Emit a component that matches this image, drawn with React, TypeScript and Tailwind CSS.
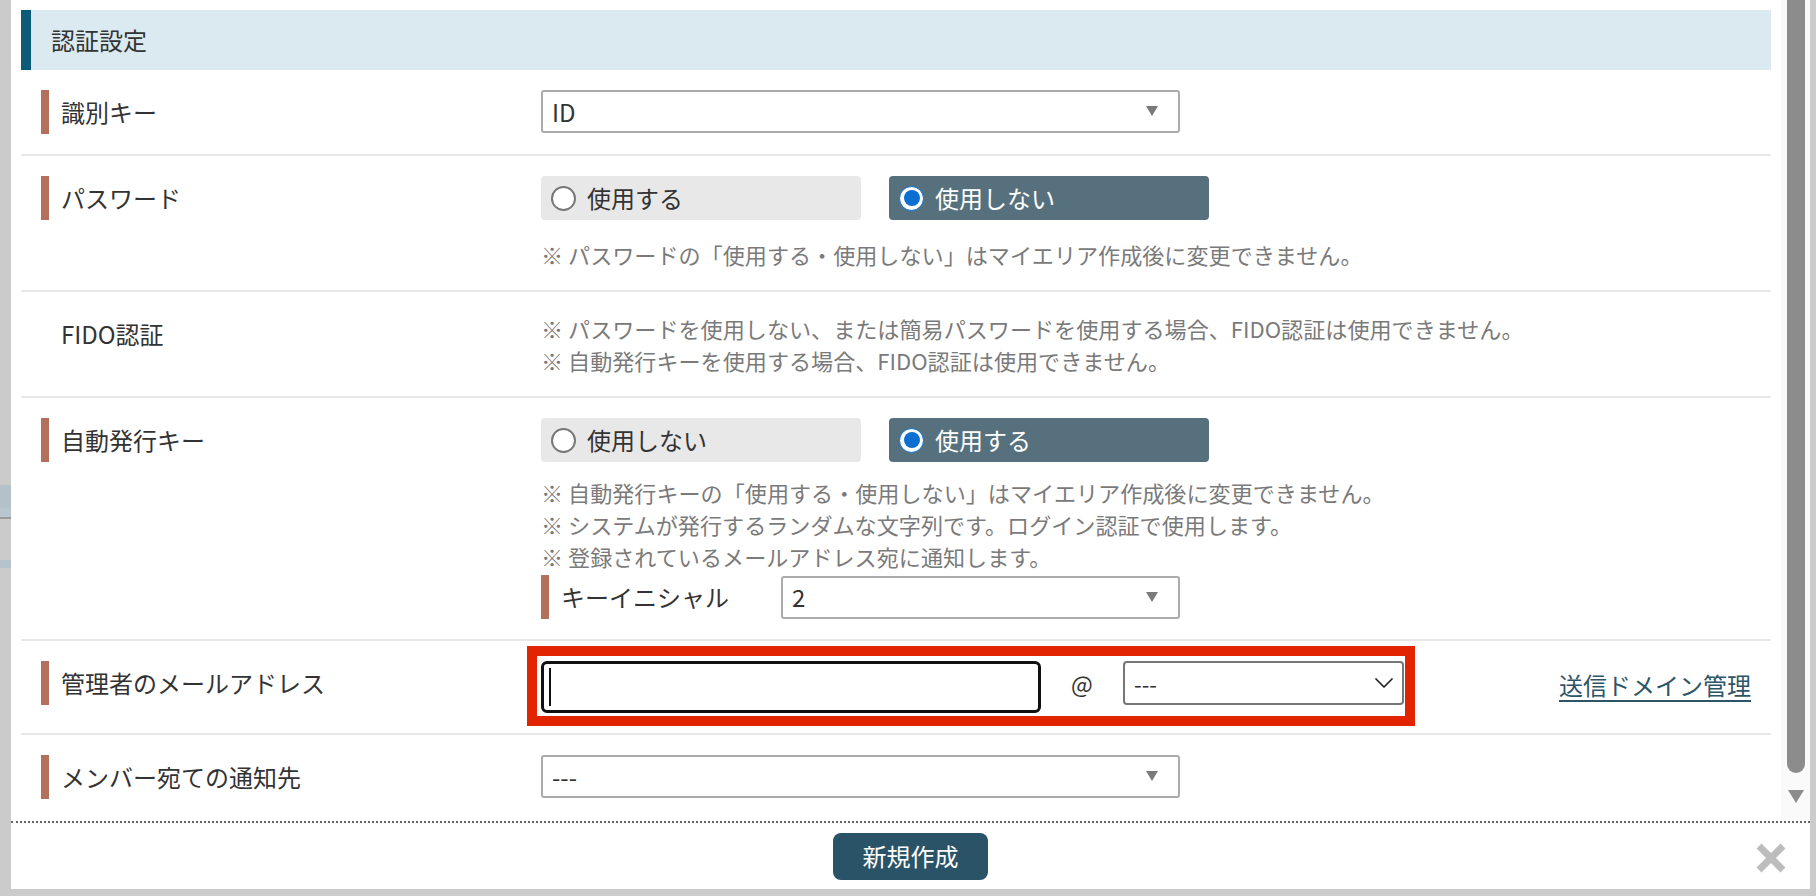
import { ChevronDown } from "lucide-react";

const FONT = "font-['Noto_Sans_CJK_JP',sans-serif]";

function Label({ text, bar = true }: { text: string; bar?: boolean }) {
  return (
    <div className="flex items-center h-[44px] w-[500px] shrink-0">
      <span className={`w-[8px] h-[44px] ${bar ? "bg-[#b3705c]" : "bg-transparent"}`} />
      <span className="ml-[12px] text-[24px] text-[#333]">{text}</span>
    </div>
  );
}

function Caret() {
  return (
    <svg width="12" height="11" viewBox="0 0 12 11">
      <path d="M0 0 L12 0 L6 10 Z" fill="#7a7a7a" />
    </svg>
  );
}

function Select({ value, width }: { value: string; width: string }) {
  return (
    <div className={`${width} h-[43px] border-2 border-[#ababab] rounded-[3px] flex items-center justify-between pl-[9px] pr-[20px] bg-white`}>
      <span className="text-[24px] text-[#333]">{value}</span>
      <Caret />
    </div>
  );
}

function Radio({ label, checked }: { label: string; checked: boolean }) {
  return (
    <div
      className={`w-[320px] h-[44px] rounded-[4px] flex items-center pl-[10px] gap-[11px] ${
        checked ? "bg-[#56717d] text-white" : "bg-[#e8e8e8] text-[#333]"
      }`}
    >
      {checked ? (
        <span className="w-[25px] h-[25px] rounded-full bg-white border-[1.5px] border-[#0a6fd0] flex items-center justify-center">
          <span className="w-[16px] h-[16px] rounded-full bg-[#0a6fd0]" />
        </span>
      ) : (
        <span className="w-[25px] h-[25px] rounded-full bg-white border-2 border-[#777]" />
      )}
      <span className="text-[24px]">{label}</span>
    </div>
  );
}

function Notes({ lines }: { lines: string[] }) {
  return (
    <div className="text-[22.1px] leading-[32px] text-[#7a7a7a]">
      {lines.map((l) => (
        <div key={l}>{l}</div>
      ))}
    </div>
  );
}

export default function App() {
  return (
    <div className={`h-screen w-full bg-[#cbcbcb] flex overflow-hidden ${FONT}`}>
      {/* page behind the dialog */}
      <div className="w-[11px] shrink-0 flex flex-col">
        <div className="h-[485px]" />
        <div className="h-[23px] bg-[#b5c1c8]" />
        <div className="h-[9px] bg-[#b8c6ce]" />
        <div className="h-[2px] bg-[#9a9a9a]" />
        <div className="h-[41px]" />
        <div className="h-[8px] bg-[#b5c4cc]" />
      </div>

      <div className="w-[1799px] h-[889px] bg-white flex flex-col">
        <div className="h-[821px] flex overflow-hidden">
          {/* scroll content */}
          <div className="w-[1760px] pl-[10px] pt-[10px] shrink-0">
            <div className="h-[60px] bg-[#dbeaf1] border-l-[10px] border-[#0b5b79] pl-[20px] flex items-center">
              <span className="text-[24px] text-[#333]">認証設定</span>
            </div>

            <div className="flex pl-[20px] py-[20px] border-b-2 border-[#e8e8e8]">
              <Label text="識別キー" />
              <Select value="ID" width="w-[639px]" />
            </div>

            <div className="flex pl-[20px] py-[20px] border-b-2 border-[#e8e8e8]">
              <Label text="パスワード" />
              <div className="flex flex-col">
                <div className="flex gap-[28px]">
                  <Radio label="使用する" checked={false} />
                  <Radio label="使用しない" checked />
                </div>
                <div className="mt-[18px]">
                  <Notes lines={["※ パスワードの「使用する・使用しない」はマイエリア作成後に変更できません。"]} />
                </div>
              </div>
            </div>

            <div className="flex pl-[20px] py-[20px] border-b-2 border-[#e8e8e8]">
              <Label text="FIDO認証" bar={false} />
              <Notes
                lines={[
                  "※ パスワードを使用しない、または簡易パスワードを使用する場合、FIDO認証は使用できません。",
                  "※ 自動発行キーを使用する場合、FIDO認証は使用できません。",
                ]}
              />
            </div>

            <div className="flex pl-[20px] py-[20px] border-b-2 border-[#e8e8e8]">
              <Label text="自動発行キー" />
              <div className="flex flex-col">
                <div className="flex gap-[28px]">
                  <Radio label="使用しない" checked={false} />
                  <Radio label="使用する" checked />
                </div>
                <div className="mt-[14px]">
                  <Notes
                    lines={[
                      "※ 自動発行キーの「使用する・使用しない」はマイエリア作成後に変更できません。",
                      "※ システムが発行するランダムな文字列です。ログイン認証で使用します。",
                      "※ 登録されているメールアドレス宛に通知します。",
                    ]}
                  />
                </div>
                <div className="flex items-center mt-[3px]">
                  <div className="flex items-center w-[240px]">
                    <span className="w-[8px] h-[44px] bg-[#b3705c]" />
                    <span className="ml-[12px] text-[24px] text-[#333]">キーイニシャル</span>
                  </div>
                  <Select value="2" width="w-[399px]" />
                </div>
              </div>
            </div>

            <div className="flex items-start pl-[20px] pr-[20px] py-[20px] border-b-2 border-[#e8e8e8]">
              <Label text="管理者のメールアドレス" />
              <div className="relative flex items-start">
                <div className="w-[500px] h-[52px] border-[3px] border-[#111] rounded-[6px] flex items-center pl-[5px]">
                  <span className="w-[2px] h-[38px] bg-[#111]" />
                </div>
                <div className="w-[82px] h-[44px] flex items-center justify-center text-[23px] text-[#333]">@</div>
                <div className="w-[281px] h-[44px] border-2 border-[#767676] rounded-[4px] flex items-center justify-between pl-[9px] pr-[2px]">
                  <span className="text-[22px] text-[#333]">---</span>
                  <ChevronDown size={32} strokeWidth={1.3} color="#222" />
                </div>
                <div className="absolute -left-[14px] -top-[15px] -right-[11px] -bottom-[13px] border-[10px] border-[#e22400]" />
              </div>
              <a className="ml-auto mt-[6px] text-[24px] text-[#2d5567] underline underline-offset-[5px]">送信ドメイン管理</a>
            </div>

            <div className="flex pl-[20px] py-[20px]">
              <Label text="メンバー宛ての通知先" />
              <Select value="---" width="w-[639px]" />
            </div>
          </div>

          {/* scrollbar */}
          <div className="flex-1" />
          <div className="w-[29px] bg-[#fafafa] flex flex-col pl-[6px] pr-[5px]">
            <div className="h-[773px] bg-[#8c8c8c] rounded-b-full" />
            <div className="mt-[17px] flex justify-center">
              <svg width="18" height="13" viewBox="0 0 18 13">
                <path d="M1 0 L17 0 L9 13 Z" fill="#8c8c8c" />
              </svg>
            </div>
          </div>
        </div>

        <div className="relative flex-1 border-t-2 border-dotted border-[#666] flex items-center justify-center">
          <button className="w-[155px] h-[47px] bg-[#2a5367] rounded-[8px] text-white text-[24px]">新規作成</button>
          <svg className="absolute right-[23px] top-[19px]" width="32" height="32" viewBox="0 0 32 32">
            <path d="M4 4 L28 28 M28 4 L4 28" stroke="#bdbdbd" strokeWidth="7" />
          </svg>
        </div>
      </div>

      <div className="flex-1" />
    </div>
  );
}
